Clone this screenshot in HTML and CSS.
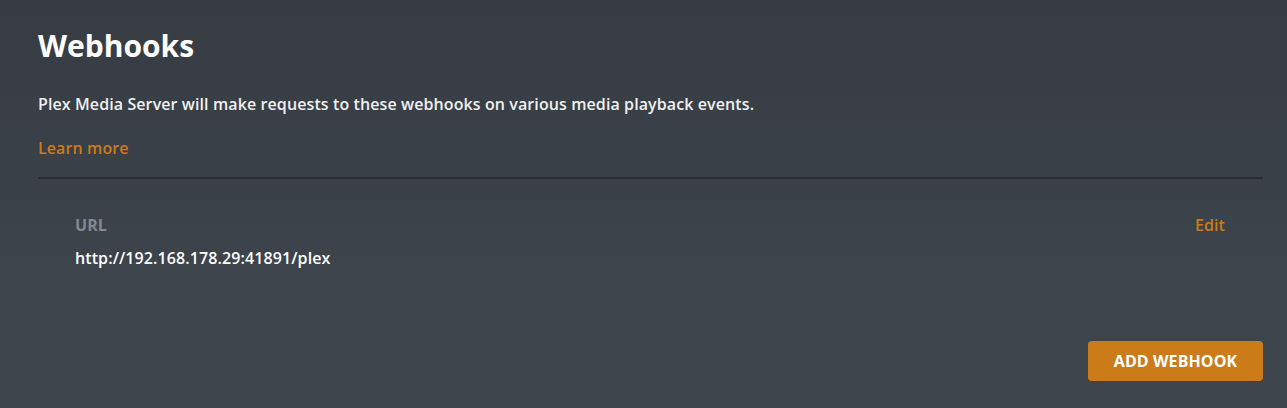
FILE: index.html
```html
<!DOCTYPE html>
<html>
<head>
<meta charset="utf-8">
<link rel="stylesheet" href="styles.css">
</head>
<body>
<div class="page">
  <h1 class="title">Webhooks</h1>
  <p class="desc">Plex Media Server will make requests to these webhooks on various media playback events.</p>
  <a class="learn" href="#">Learn more</a>
  <div class="divider"></div>
  <div class="hook">
    <div class="hook-info">
      <div class="label">URL</div>
      <div class="url">http://192.168.178.29:41891/plex</div>
    </div>
    <a class="edit" href="#">Edit</a>
  </div>
  <div class="actions">
    <button class="add">ADD WEBHOOK</button>
  </div>
</div>
</body>
</html>
```
FILE: styles.css
```css
html, body {
  margin: 0;
  height: 100%;
}
body {
  background: linear-gradient(180deg, #373c43 0%, #3c434b 60%, #3e454d 100%);
  font-family: "Open Sans", "Liberation Sans", sans-serif;
  color: #eeeeee;
  letter-spacing: 0.1px;
}
.page {
  padding: 23px 24px 0 38px;
  display: flex;
  flex-direction: column;
}
.title {
  margin: 0;
  font-size: 30px;
  font-weight: 700;
  line-height: 46px;
  color: #ffffff;
  letter-spacing: 0;
}
.desc {
  margin: 24px 0 0;
  font-size: 16px;
  font-weight: 600;
  line-height: 22px;
  color: #f0f0f0;
}
.learn {
  margin-top: 22px;
  font-size: 16px;
  font-weight: 600;
  line-height: 22px;
  color: #cc7b19;
  text-decoration: none;
}
.divider {
  margin-top: 18px;
  height: 2px;
  background: #2a2e34;
}
.hook {
  display: flex;
  justify-content: space-between;
  align-items: flex-start;
  padding: 35px 38px 0 37px;
}
.label {
  font-size: 16px;
  font-weight: 700;
  line-height: 22px;
  color: #858a90;
}
.url {
  margin-top: 11px;
  font-size: 16px;
  font-weight: 600;
  line-height: 22px;
  color: #ffffff;
}
.edit {
  font-size: 16px;
  font-weight: 600;
  line-height: 22px;
  color: #cc7b19;
  text-decoration: none;
}
.actions {
  display: flex;
  justify-content: flex-end;
  margin-top: 72px;
}
.add {
  width: 175px;
  height: 40px;
  border: none;
  border-radius: 4px;
  background: #cc7b19;
  color: #ffffff;
  font-family: "Open Sans", "Liberation Sans", sans-serif;
  font-size: 16px;
  font-weight: 700;
  letter-spacing: 0.1px;
  padding: 0;
}
```
